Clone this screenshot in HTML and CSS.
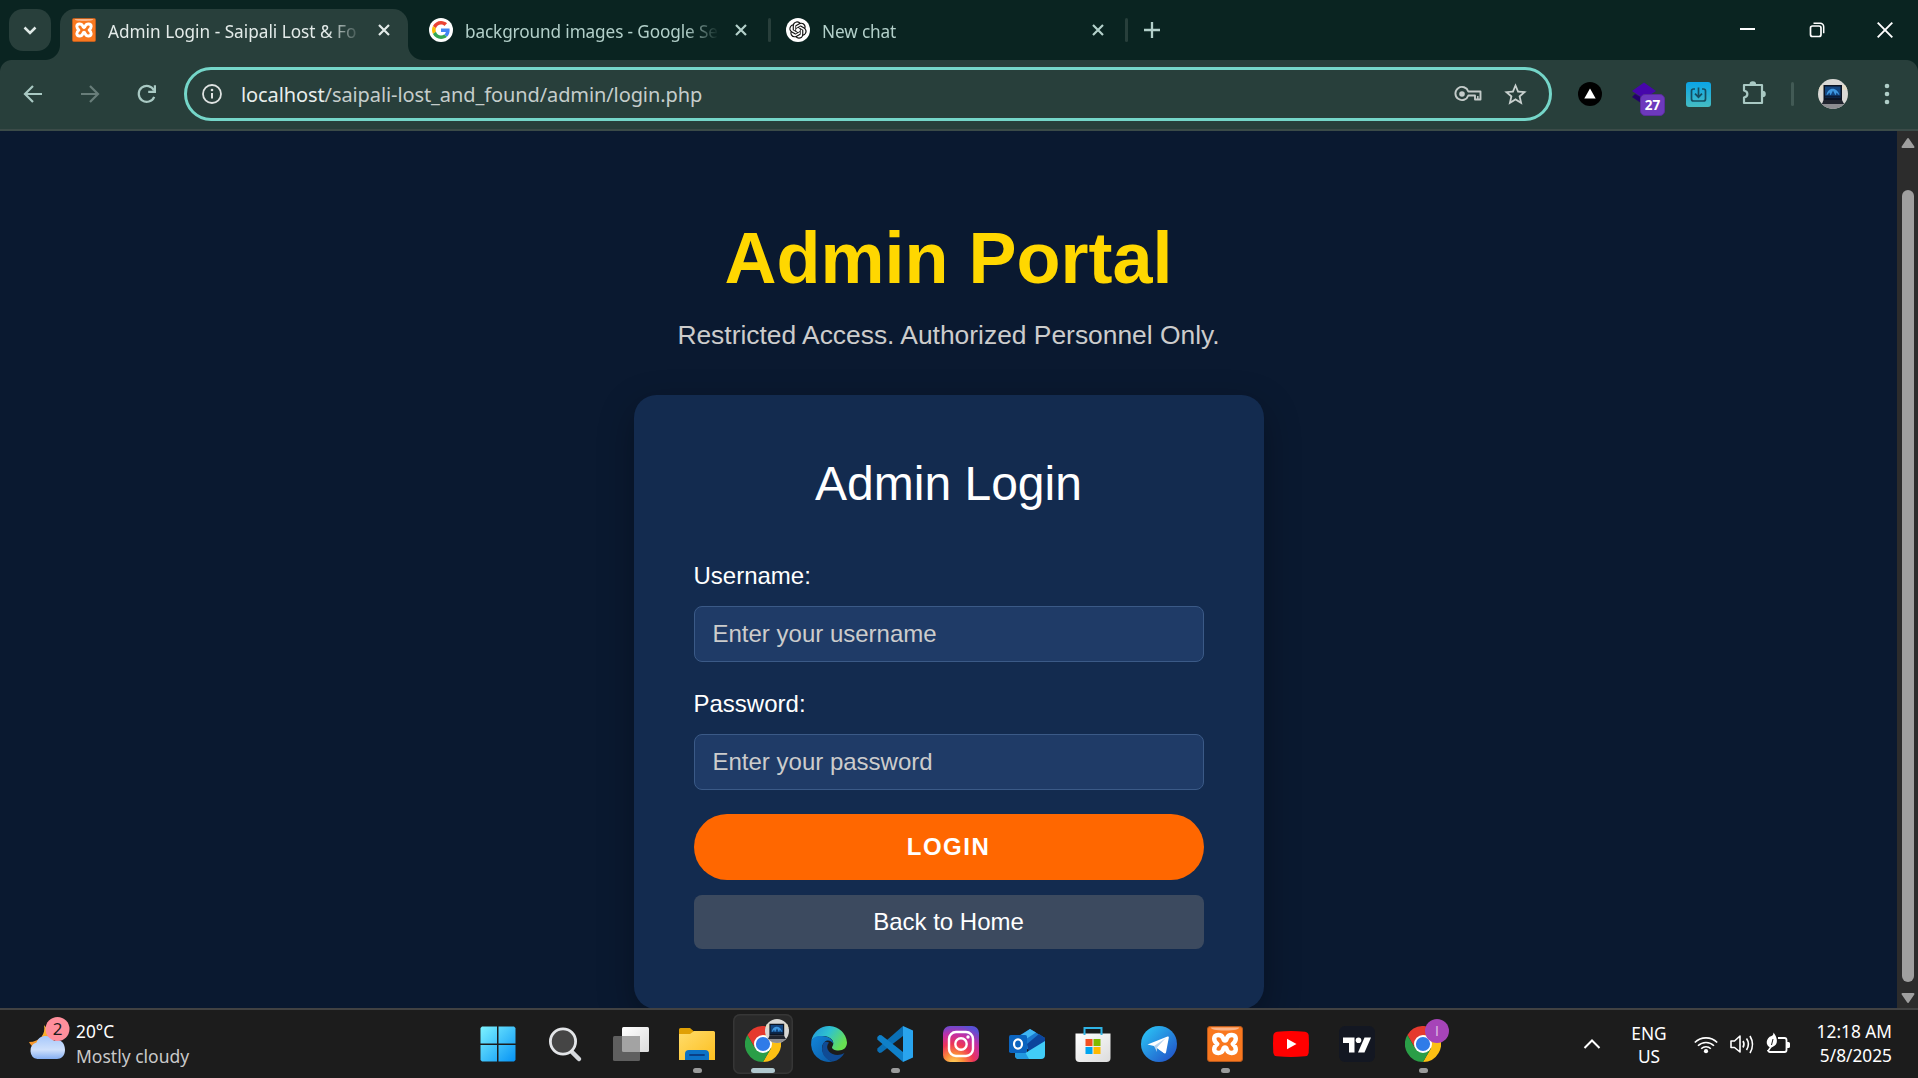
FILE: index.html
```html
<!DOCTYPE html>
<html lang="en">
<head>
<meta charset="utf-8">
<title>Admin Login - Saipali Lost &amp; Found</title>
<link rel="stylesheet" href="styles.css">
</head>
<body>
<svg class="defs" width="0" height="0" aria-hidden="true">
  <defs>
    <linearGradient id="gWin" x1="0" y1="0" x2="1" y2="1"><stop offset="0" stop-color="#7df3ff"/><stop offset="1" stop-color="#0693f5"/></linearGradient>
    <linearGradient id="gFolder" x1="0" y1="0" x2="1" y2="1"><stop offset="0" stop-color="#ffdc6b"/><stop offset="1" stop-color="#fdbf1f"/></linearGradient>
    <linearGradient id="gEdgeTop" x1="0" y1="0" x2="1" y2=".5"><stop offset="0" stop-color="#2090dd"/><stop offset=".5" stop-color="#2fc2cf"/><stop offset="1" stop-color="#67e052"/></linearGradient>
    <linearGradient id="gEdgeLow" x1="0" y1="0" x2="1" y2="1"><stop offset="0" stop-color="#1186da"/><stop offset="1" stop-color="#0c59a4"/></linearGradient>
    <radialGradient id="gInsta" cx=".3" cy="1.05" r="1.1"><stop offset="0" stop-color="#ffd85c"/><stop offset=".25" stop-color="#fb8d3a"/><stop offset=".5" stop-color="#ee3557"/><stop offset=".75" stop-color="#c32fa6"/><stop offset="1" stop-color="#5a50d5"/></radialGradient>
    <linearGradient id="gTele" x1="0" y1="0" x2="1" y2="1"><stop offset="0" stop-color="#2bcdf9"/><stop offset="1" stop-color="#2149c4"/></linearGradient>
    <linearGradient id="gCloud" x1="0" y1="0" x2="0" y2="1"><stop offset="0" stop-color="#a6c8fb"/><stop offset=".6" stop-color="#cfe0fb"/><stop offset="1" stop-color="#84aef2"/></linearGradient>
    <linearGradient id="gMoon" x1="0" y1="0" x2="0" y2="1"><stop offset="0" stop-color="#ffc32e"/><stop offset="1" stop-color="#f2882b"/></linearGradient>
    <linearGradient id="gExt" x1="0" y1="0" x2="0" y2="1"><stop offset="0" stop-color="#0aa4e6"/><stop offset="1" stop-color="#45bcc2"/></linearGradient>
    <linearGradient id="gSheet" x1="0" y1="0" x2="1" y2="1"><stop offset="0" stop-color="#fff"/><stop offset="1" stop-color="#dcdcdc"/></linearGradient>
    <symbol id="xampp" viewBox="0 0 36 36">
      <rect x=".5" y=".5" width="35" height="35" rx="2.5" fill="#f9781f" stroke="#b9591c"/>
      <path d="M4 1.500h28c0 2-4 3-14 3s-14-1-14-3z" fill="#fbb58a"/>
      <path d="M18 14.500c-1 0-1.500-.5-2-2.500C14.500 8 7.500 8 7.200 12.500c0 3 1.700 4.300 3.100 5.500-1.400 1.200-3.100 2.500-3.100 5.500.3 4.500 7.300 4.500 8.800.500.5-2 1-2.500 2-2.500s1.500.5 2 2.500c1.500 4 8.500 4 8.800-.5 0-3-1.700-4.300-3.100-5.500 1.400-1.200 3.100-2.500 3.100-5.500C28.500 8 21.500 8 20 12c-.5 2-1 2.500-2 2.500z" fill="none" stroke="#fff" stroke-width="4.400" stroke-linejoin="round"/>
    </symbol>
    <symbol id="chrome" viewBox="0 0 36 36">
      <path d="M18 9h15.600A18 18 0 0 1 18 36l7.800-13.500z" fill="#fcc013"/>
      <path d="M2.400 9A18 18 0 0 1 33.600 9H18l-7.800 13.500z" fill="#e5392e"/>
      <path d="M2.400 9A18 18 0 0 0 18 36l7.800-13.500H10.200z" fill="#2a9e47"/>
      <circle cx="18" cy="18" r="9" fill="#fff"/><circle cx="18" cy="18" r="7.100" fill="#2f7be8"/>
    </symbol>
    <symbol id="laptop" viewBox="0 0 30 30">
      <clipPath id="cLap"><circle cx="15" cy="15" r="15"/></clipPath>
      <g clip-path="url(#cLap)">
        <rect width="30" height="30" fill="#d9d8d5"/><rect y="6" width="30" height="5" fill="#e3dcc8"/><rect y="24" width="30" height="6" fill="#8d8d91"/>
        <path d="M5.500 6h18.500v15h-18.500z" fill="#0b1424"/><path d="M7 7.500h15.500v11H7z" fill="#124580"/><path d="M8.500 16.500c1-9 11-9 13 0l-3-3-1 3-2.500-5-2.500 5-1-3z" fill="#3d97e0"/><path d="M7 16.500h15.500v2H7z" fill="#0a1c38"/>
        <path d="M5.500 21h18.500l2 4h-22z" fill="#20242e"/>
      </g>
    </symbol>
    <symbol id="close" viewBox="0 0 12 12"><path d="M1 1l10 10M11 1 1 11" stroke="currentColor" stroke-width="2.200" fill="none"/></symbol>
  </defs>
</svg>

<div class="screen">
  <header class="tabstrip">
    <button class="tab-search"><svg width="14" height="9" viewBox="0 0 14 9"><path d="M1.500 1.500 7 7l5.500-5.500" fill="none" stroke="#dfe9e6" stroke-width="2.500"/></svg></button>
    <div class="tab tab-active">
      <svg class="favicon" width="24" height="24"><use href="#xampp"/></svg>
      <span class="tab-title title-admin">Admin Login - Saipali Lost &amp; Fo</span>
      <svg class="tab-close" width="12" height="12"><use href="#close"/></svg>
    </div>
    <div class="tab tab-google">
      <svg class="favicon" width="24" height="24" viewBox="0 0 24 24"><circle cx="12" cy="12" r="12" fill="#fff"/>
        <g transform="translate(3 3) scale(.375)"><path fill="#EA4335" d="M24 9.500c3.540 0 6.710 1.220 9.210 3.600l6.850-6.850C35.900 2.380 30.470 0 24 0 14.620 0 6.510 5.380 2.560 13.220l7.980 6.190C12.430 13.720 17.740 9.500 24 9.500z"/><path fill="#4285F4" d="M46.980 24.550c0-1.570-.15-3.090-.38-4.550H24v9.020h12.940c-.58 2.960-2.260 5.480-4.780 7.180l7.730 6c4.510-4.180 7.090-10.360 7.090-17.650z"/><path fill="#FBBC05" d="M10.530 28.590c-.48-1.450-.76-2.990-.76-4.590s.27-3.140.76-4.590l-7.980-6.190C.92 16.460 0 20.120 0 24c0 3.880.92 7.540 2.560 10.780l7.970-6.190z"/><path fill="#34A853" d="M24 48c6.480 0 11.930-2.130 15.890-5.810l-7.730-6c-2.150 1.450-4.920 2.300-8.160 2.300-6.260 0-11.570-4.220-13.470-9.910l-7.980 6.190C6.510 42.620 14.620 48 24 48z"/></g></svg>
      <span class="tab-title title-google">background images - Google Se</span>
      <svg class="tab-close" width="12" height="12"><use href="#close"/></svg>
    </div>
    <div class="tab-divider"></div>
    <div class="tab tab-chat">
      <svg class="favicon" width="24" height="24" viewBox="0 0 24 24"><circle cx="12" cy="12" r="12" fill="#fff"/>
        <g transform="translate(3.300 3.300) scale(.725)"><path fill="#111" d="M22.2819 9.8211a5.9847 5.9847 0 0 0-.5157-4.9108 6.0462 6.0462 0 0 0-6.5098-2.9A6.0651 6.0651 0 0 0 4.9807 4.1818a5.9847 5.9847 0 0 0-3.9977 2.9 6.0462 6.0462 0 0 0 .7427 7.0966 5.98 5.98 0 0 0 .511 4.9107 6.051 6.051 0 0 0 6.5146 2.9001A5.9847 5.9847 0 0 0 13.2599 24a6.0557 6.0557 0 0 0 5.7718-4.2058 5.9894 5.9894 0 0 0 3.9977-2.9001 6.0557 6.0557 0 0 0-.7475-7.0729zm-9.022 12.6081a4.4755 4.4755 0 0 1-2.8764-1.0408l.1419-.0804 4.7783-2.7582a.7948.7948 0 0 0 .3927-.6813v-6.7369l2.02 1.1686a.071.071 0 0 1 .038.052v5.5826a4.504 4.504 0 0 1-4.4945 4.4944zm-9.6607-4.1254a4.4708 4.4708 0 0 1-.5346-3.0137l.142.0852 4.783 2.7582a.7712.7712 0 0 0 .7806 0l5.8428-3.3685v2.3324a.0804.0804 0 0 1-.0332.0615L9.74 19.9502a4.4992 4.4992 0 0 1-6.1408-1.6464zM2.3408 7.8956a4.485 4.485 0 0 1 2.3655-1.9728V11.6a.7664.7664 0 0 0 .3879.6765l5.8144 3.3543-2.0201 1.1685a.0757.0757 0 0 1-.071 0l-4.8303-2.7865A4.504 4.504 0 0 1 2.3408 7.872zm16.5963 3.8558L13.1038 8.364 15.1192 7.2a.0757.0757 0 0 1 .071 0l4.8303 2.7913a4.4944 4.4944 0 0 1-.6765 8.1042v-5.6772a.79.79 0 0 0-.407-.667zm2.0107-3.0231l-.142-.0852-4.7735-2.7818a.7759.7759 0 0 0-.7854 0L9.409 9.2297V6.8974a.0662.0662 0 0 1 .0284-.0615l4.8303-2.7866a4.4992 4.4992 0 0 1 6.6802 4.66zM8.3065 12.863l-2.02-1.1638a.0804.0804 0 0 1-.038-.0567V6.0742a4.4992 4.4992 0 0 1 7.3757-3.4537l-.142.0805L8.704 5.459a.7948.7948 0 0 0-.3927.6813zm1.0976-2.3654l2.602-1.4998 2.6069 1.4998v2.9994l-2.5974 1.4997-2.6067-1.4997Z"/></g></svg>
      <span class="tab-title title-chat">New chat</span>
      <svg class="tab-close" width="12" height="12"><use href="#close"/></svg>
    </div>
    <div class="tab-divider"></div>
    <button class="new-tab"><svg width="16" height="16" viewBox="0 0 16 16"><path d="M8 0v16M0 8h16" stroke="#b3d0ca" stroke-width="2.300"/></svg></button>
    <div class="window-controls">
      <span class="win-btn"><svg width="15" height="15" viewBox="0 0 15 15"><path d="M0 7h15" stroke="#fff" stroke-width="2"/></svg></span>
      <span class="win-btn"><svg width="16" height="16" viewBox="0 0 16 16"><rect x="1.500" y="4" width="10.500" height="10.500" rx="2" fill="none" stroke="#fff" stroke-width="1.700"/><path d="M4.500 1.300h6.700a3.500 3.500 0 0 1 3.500 3.500v6.500" fill="none" stroke="#fff" stroke-width="1.500"/></svg></span>
      <span class="win-btn"><svg width="16" height="16" viewBox="0 0 16 16"><path d="M.7.7l14.600 14.600M15.300.7.7 15.300" stroke="#fff" stroke-width="1.900"/></svg></span>
    </div>
  </header>

  <div class="toolbar">
    <span class="nav-btn"><svg width="20" height="20" viewBox="0 0 20 20"><path d="M19 10H2.500M10 2l-8 8 8 8" fill="none" stroke="#a9c9c3" stroke-width="2.200"/></svg></span>
    <span class="nav-btn"><svg width="20" height="20" viewBox="0 0 20 20"><path d="M1 10h16.500M10 2l8 8-8 8" fill="none" stroke="#687d79" stroke-width="2.200"/></svg></span>
    <span class="nav-btn"><svg width="20" height="20" viewBox="0 0 20 20"><path d="M17.200 12.800A8 8 0 1 1 17 6.500" fill="none" stroke="#a9c9c3" stroke-width="2.200"/><path d="M17.900 1.200v6.700h-6.700" fill="none" stroke="#a9c9c3" stroke-width="2.200"/></svg></span>
    <div class="omnibox">
      <svg class="site-info" width="20" height="20" viewBox="0 0 20 20"><circle cx="10" cy="10" r="9" fill="none" stroke="#dfe3e2" stroke-width="1.800"/><path d="M10 9v5.500" stroke="#dfe3e2" stroke-width="2"/><circle cx="10" cy="6" r="1.300" fill="#dfe3e2"/></svg>
      <span class="url"><span class="url-host">localhost</span>/saipali-lost_and_found/admin/login.php</span>
      <svg class="key" width="28" height="16" viewBox="0 0 28 16"><path d="M14.300 5.500h12.200v8h-5.500v-4h-6.700A6.600 6.600 0 1 1 14.300 5.500z" fill="none" stroke="#c3cbc9" stroke-width="1.900" stroke-linejoin="round"/><path d="M23.800 10v3" stroke="#c3cbc9" stroke-width="1.500"/><circle cx="8" cy="8" r="2.800" fill="#c3cbc9"/></svg>
      <svg class="star" width="27" height="27" viewBox="0 0 24 24"><path fill="#c8d0ce" d="M22 9.240l-7.190-.62L12 2 9.190 8.630 2 9.240l5.460 4.730L5.820 21 12 17.270 18.180 21l-1.630-7.030L22 9.240zM12 15.400l-3.760 2.270 1-4.280-3.320-2.880 4.380-.38L12 6.100l1.710 4.040 4.380.38-3.320 2.880 1 4.280L12 15.400z"/></svg>
    </div>
    <div class="extensions">
      <span class="ext"><svg width="24" height="24" viewBox="0 0 24 24"><circle cx="12" cy="12" r="12"/><path d="M12 6.500 17.700 16.500H6.300z" fill="#fff"/></svg></span>
      <span class="ext ext-count"><svg width="24" height="24" viewBox="0 0 24 24"><path d="M0 15l3-3 9 5 9-5 3 3-12 8z" fill="#24006b"/><path d="M12 .5 24 9 12 17 0 9z" fill="#4706ab"/></svg><span class="count-badge">27</span></span>
      <span class="ext"><svg width="25" height="25" viewBox="0 0 25 25"><rect width="25" height="25" rx="3" fill="url(#gExt)"/><path d="M9 7H7.500a2 2 0 0 0-2 2v8a2 2 0 0 0 2 2h10a2 2 0 0 0 2-2V9a2 2 0 0 0-2-2H16" fill="none" stroke="#154d60" stroke-width="1.700"/><path d="M12.500 5.500V15M9 11.700l3.500 3.500 3.500-3.500" fill="none" stroke="#154d60" stroke-width="1.700"/></svg></span>
      <span class="ext"><svg class="puzzle" width="26" height="26" viewBox="0 0 26 26"><path d="M3 5h18v18H3v-5.500c4.500-1 4.500-6 0-7z" fill="none" stroke="#a9c9c3" stroke-width="2.200" stroke-linejoin="round"/><path d="M8.500 4.500a3.300 3.300 0 0 1 6.600 0zM21.500 10.700a3.300 3.300 0 0 1 0 6.600z" fill="#a9c9c3"/></svg></span>
    </div>
    <div class="toolbar-divider"></div>
    <span class="ext"><svg width="30" height="30"><use href="#laptop"/></svg></span>
    <span class="ext"><svg width="6" height="22" viewBox="0 0 6 22"><g fill="#b0cec8"><circle cx="3" cy="3" r="2.300"/><circle cx="3" cy="11" r="2.300"/><circle cx="3" cy="19" r="2.300"/></g></svg></span>
  </div>

  <div class="viewport">
    <main class="page">
      <h1 class="page-title">Admin Portal</h1>
      <p class="page-subtitle">Restricted Access. Authorized Personnel Only.</p>
      <form class="login-card">
        <h2 class="card-title">Admin Login</h2>
        <label class="field-label" for="username">Username:</label>
        <input class="field-input" id="username" type="text" placeholder="Enter your username">
        <label class="field-label" for="password">Password:</label>
        <input class="field-input" id="password" type="password" placeholder="Enter your password">
        <button class="btn-login" type="button">LOGIN</button>
        <a class="btn-home">Back to Home</a>
      </form>
    </main>
    <div class="scrollbar">
      <svg width="14" height="12" viewBox="0 0 14 12"><path d="M7 2 12.500 10h-11z" fill="#9f9f9f" stroke="#9f9f9f" stroke-width="2" stroke-linejoin="round"/></svg>
      <div class="scroll-thumb"></div>
      <svg width="14" height="12" viewBox="0 0 14 12"><path d="M7 10 12.500 2h-11z" fill="#9f9f9f" stroke="#9f9f9f" stroke-width="2" stroke-linejoin="round"/></svg>
    </div>
  </div>

  <footer class="taskbar">
    <div class="weather">
      <svg class="weather-icon" width="42" height="46" viewBox="0 0 42 46">
        <path d="M15 8c2 9-4 17-15 17 3 6 10 9 16 7l14-14C25 16 18 13 15 8z" fill="url(#gMoon)"/>
        <path d="M8.500 42a8.500 8.500 0 0 1-1-16.500C10 17 22 17 25 24c6-3 11 2 11 9 0 6-4 9-8 9z" fill="url(#gCloud)"/>
        <circle cx="28.500" cy="12" r="12" fill="#ff8f9c"/>
        <text x="28.500" y="17.500" class="weather-count">2</text>
      </svg>
      <div class="weather-text"><span class="temp">20°C</span><span class="condition">Mostly cloudy</span></div>
    </div>
    <nav class="apps">
      <span class="app app-start"><svg width="36" height="36" viewBox="0 0 36 36"><path d="M2 .5h15v17H.5V2zM18.500.5H34L35.500 2v15.500h-17zM.5 19H17v16.500H2L.5 34zM18.500 19h17v15L34 35.500H18.500z" fill="url(#gWin)"/></svg></span>
      <span class="app"><svg width="36" height="36" viewBox="0 0 36 36"><path d="M25 26l7 7" stroke="#d5d8dc" stroke-width="4.500" stroke-linecap="round"/><circle cx="16" cy="15.500" r="12.600" fill="#454545" stroke="#e3e5e8" stroke-width="2.800"/></svg></span>
      <span class="app"><svg width="36" height="36" viewBox="0 0 36 36"><rect x="9" y="1" width="27" height="25" rx="1.500" fill="url(#gSheet)"/><rect x="0" y="10" width="27" height="25" rx="1.500" fill="#5f5f5f"/><path d="M9 10h18v16H10.500A1.500 1.500 0 0 1 9 24.500z" fill="#a3a3a3"/></svg></span>
      <span class="app"><svg width="36" height="36" viewBox="0 0 36 36"><path d="M0 3.500A1.500 1.500 0 0 1 1.500 2h9.500l4 3.500h19.500V12H0z" fill="#e0a005"/><path d="M0 8h11l4-3h19.500A1.500 1.500 0 0 1 36 6.500V34H0z" fill="url(#gFolder)"/><path d="M6 34v-6a4 4 0 0 1 4-4h16a4 4 0 0 1 4 4v6z" fill="#0c72c6"/><path d="M11 29h14" stroke="#0a3f86" stroke-width="1.800" stroke-linecap="round"/></svg><i class="dot"></i></span>
      <span class="app app-active"><svg width="36" height="36"><use href="#chrome"/></svg><svg class="profile-badge" width="24" height="24"><use href="#laptop"/></svg><i class="dot dot-wide"></i></span>
      <span class="app"><svg width="36" height="36" viewBox="0 0 36 36">
        <path d="M.3 15A18 18 0 0 1 36 16.500c0 5-3.500 8-8.500 8-4 0-6.500-1.500-6.500-3 0-1 1.500-2 1.300-4.500C22 13 18 10.500 13 10 7 9.500 2 12 .3 15z" fill="url(#gEdgeTop)"/>
        <path d="M.3 15C2 10.500 7 9.500 11 10c7 .3 11.500 4 11.300 8-1.500-3.500-6-4.500-8.800-2-6 6 0 17 8.500 19.500A18 18 0 0 1 .3 15z" fill="url(#gEdgeLow)"/>
        <path d="M12.500 17C8.500 25 13 34 22 35.500c5-1 9-4 11.500-8.500-5 3-12 2.500-15.500-1.500-2.500-3-2.500-6 0-9-2-1-4.500-1-5.500.5z" fill="#104b94"/></svg></span>
      <span class="app"><svg width="36" height="36" viewBox="0 0 36 36"><path d="M26 0v10L4.500 26.500 2.500 27 .3 25v-2.500z" fill="#0a6fb5"/><path d="M26 36V26L4.500 9.300 2.500 9 .3 11v2.500z" fill="#0f80c9"/><path d="M26 0l10 4.500v27L26 36z" fill="#29a4ee"/></svg><i class="dot"></i></span>
      <span class="app"><svg width="36" height="36" viewBox="0 0 36 36"><rect width="36" height="36" rx="7" fill="url(#gInsta)"/><g fill="none" stroke="#fff" stroke-width="2.400"><rect x="6" y="6" width="24" height="24" rx="7"/><circle cx="18" cy="18" r="5.700"/></g><circle cx="25" cy="11" r="1.700" fill="#fff"/></svg></span>
      <span class="app"><svg width="36" height="36" viewBox="0 0 36 36"><path d="M6 12 21 3l15 9v3L6 29z" fill="#1a78cf"/><path d="M12 9 21 3l6 3.500L14 15z" fill="#3fb5f2"/><path d="M18 18 30 8l6 4v5L20 27z" fill="#0c459c"/><path d="M6 20l12 6 18-11v14a4 4 0 0 1-4 4H10a4 4 0 0 1-4-4z" fill="#41cdf8"/><path d="M6 18l10 8 4 7H10a4 4 0 0 1-4-4z" fill="#229ae0"/><rect y="9" width="18" height="18" rx="1.800" fill="#0b64bf"/><ellipse cx="9" cy="18" rx="4" ry="4.700" fill="none" stroke="#fff" stroke-width="2.200"/></svg></span>
      <span class="app"><svg width="36" height="36" viewBox="0 0 36 36"><path d="M.5 7.500h35V32a4 4 0 0 1-4 4h-27a4 4 0 0 1-4-4z" fill="url(#gSheet)"/><path d="M9.500 9V2h17v7" fill="none" stroke="#2fb4e6" stroke-width="2"/><path d="M10.500 13h7v7h-7z" fill="#f25022"/><path d="M18.500 13h7v7h-7z" fill="#7fba00"/><path d="M10.500 21h7v7h-7z" fill="#00a4ef"/><path d="M18.500 21h7v7h-7z" fill="#ffb900"/></svg></span>
      <span class="app"><svg width="36" height="36" viewBox="0 0 36 36"><circle cx="18" cy="18" r="18" fill="url(#gTele)"/><path d="M6.500 18.500 26.500 10.500c1-.4 1.500.2 1.300 1.300L25 26.500c-.3 1.200-1 1.200-1.800.7L13 20z" fill="#fff"/><path d="M13 20 25 12 16 22v4z" fill="#b6d3ee"/><path d="M25 12 16 21.500l7 5.500z" fill="#fff"/></svg></span>
      <span class="app"><svg width="36" height="36"><use href="#xampp"/></svg><i class="dot"></i></span>
      <span class="app"><svg width="36" height="36" viewBox="0 0 36 36"><path d="M4 5.700Q18 4.300 32 5.700q3.300.4 3.700 3.800.6 8.500 0 17-.4 3.400-3.700 3.800-14 1.400-28 0Q.7 29.900.3 26.500q-.6-8.500 0-17Q.7 6.100 4 5.700z" fill="red"/><path d="M14 12.700 23.500 18 14 23.300z" fill="#fff"/></svg></span>
      <span class="app"><svg width="36" height="36" viewBox="0 0 36 36"><rect width="36" height="36" rx="6" fill="#131722"/><g fill="#fff"><path d="M4 11.500h11.500v15H10V17H4z"/><circle cx="19.500" cy="14.200" r="2.800"/><path d="M25.500 11.500H32l-6.500 15H19z"/></g></svg></span>
      <span class="app"><svg width="36" height="36"><use href="#chrome"/></svg><span class="profile-badge profile-letter">I</span><i class="dot"></i></span>
    </nav>
    <div class="tray">
      <svg class="chevron" width="18" height="12" viewBox="0 0 18 12"><path d="M1.500 10 9 2.500l7.500 7.500" fill="none" stroke="#fff" stroke-width="2"/></svg>
      <div class="lang"><span>ENG</span><span>US</span></div>
      <div class="status">
        <svg width="24" height="20" viewBox="0 0 24 20"><g fill="none" stroke="#fff" stroke-width="1.600"><path d="M.8 8.500a15.800 15.800 0 0 1 22.400 0"/><path d="M4 11.800a11.300 11.300 0 0 1 16 0"/><path d="M7.200 14.800a6.800 6.800 0 0 1 9.600 0"/></g><circle cx="12" cy="17.200" r="2.100" fill="#fff"/></svg>
        <svg width="24" height="20" viewBox="0 0 24 20"><g fill="none" stroke="#fff" stroke-width="1.600"><path d="M1 7v6.500h3.500L10 18V2L4.500 7z" stroke-linejoin="round"/><path d="M13 7q2 3 0 6.500M16.500 4.500q3.800 5.500 0 11.500M20 2q5 8.500 0 17"/></g></svg>
        <svg width="24" height="20" viewBox="0 0 24 20"><path d="M12 4h6.500a2 2 0 0 1 2 2v10a2 2 0 0 1-2 2H4a2 2 0 0 1-2-2" fill="none" stroke="#fff" stroke-width="1.800"/><path d="M21 8h1.500a1.500 1.500 0 0 1 1.500 1.500v3a1.500 1.500 0 0 1-1.500 1.500H21z" fill="#fff"/><path d="M7.500-1.500c4 5 5.500 12-1 14.500L5 13.500C-1.500 12 0 3.500 5.500 2 7 1.500 7.500 0 7.500-1.500z" fill="#fff"/><path d="M2 17l3.500-5" stroke="#fff" stroke-width="1.500"/><path d="M7 5 5.500 11" stroke="#1c1c1c" stroke-width="1"/></svg>
      </div>
      <div class="clock"><span>12:18 AM</span><span>5/8/2025</span></div>
    </div>
  </footer>
</div>
</body>
</html>
```
FILE: styles.css
```css
* { box-sizing: border-box; }

body {
  margin: 0;
  overflow: hidden;
  background: #0a1930;
  font-family: "Noto Sans", "Open Sans", sans-serif;
}

svg { display: block; flex: none; overflow: visible; }
.defs { position: absolute; }
button { border: 0; padding: 0; background: none; font: inherit; }

.screen {
  width: 1918px;
  height: 1078px;
  display: flex;
  flex-direction: column;
}

/* Tab strip */
.tabstrip {
  height: 60px;
  flex: none;
  display: flex;
  background: #0a2421;
  padding-left: 9px;
}
.tab-search {
  width: 42px;
  height: 42px;
  margin: 9px 9px 0 0;
  border-radius: 14px;
  background: #283f3b;
  display: flex;
  align-items: center;
  justify-content: center;
}
.tab {
  height: 51px;
  margin-top: 9px;
  padding-bottom: 9px;
  display: flex;
  align-items: center;
  color: #b3d0ca;
  font-size: 17.2px;
  letter-spacing: -0.12px;
}
.tab-active {
  position: relative;
  width: 348px;
  padding-left: 12px;
  border-radius: 15px 15px 0 0;
  background: #283f3b;
  color: #e3ebe9;
}
.tab-active::before,
.tab-active::after {
  content: "";
  position: absolute;
  bottom: 0;
  width: 15px;
  height: 15px;
}
.tab-active::before { left: -15px; background: radial-gradient(circle at 0 0, transparent 14.5px, #283f3b 15.5px); }
.tab-active::after { right: -15px; background: radial-gradient(circle at 100% 0, transparent 14.5px, #283f3b 15.5px); }
.tab-google { width: 360px; padding-left: 21px; }
.tab-chat { width: 354px; padding-left: 15px; }
.tab-title {
  width: 252px;
  margin: 3px 18px 0 12px;
  white-space: nowrap;
  -webkit-mask-image: linear-gradient(90deg, #000 220px, transparent 254px);
  mask-image: linear-gradient(90deg, #000 220px, transparent 254px);
}
.title-admin { letter-spacing: 0; }
.tab-divider {
  width: 3px;
  height: 24px;
  margin-top: 18px;
  border-radius: 2px;
  background: #283f3b;
}
.new-tab { margin: 0 0 0 16px; height: 60px; }
.window-controls { display: flex; margin-left: auto; height: 59px; }
.win-btn {
  width: 69px;
  display: flex;
  align-items: center;
  justify-content: center;
}
.win-btn:last-child { width: 67px; }

/* Toolbar */
.toolbar {
  height: 71px;
  flex: none;
  display: flex;
  align-items: center;
  padding: 0 4px 1px 4px;
  border-bottom: 2px solid #3b4b48;
  background:
    radial-gradient(circle at 12px 12px, #283f3b 11.5px, #0a2421 12.5px) 0 0 / 12px 12px no-repeat,
    radial-gradient(circle at 0 12px, #283f3b 11.5px, #0a2421 12.5px) 100% 0 / 12px 12px no-repeat,
    #283f3b;
}
.nav-btn { width: 57px; display: flex; justify-content: center; }
.omnibox {
  width: 1368px;
  height: 54px;
  margin: 0 11px 0 9px;
  padding: 0 20px 0 16px;
  border: 3px solid #75d6c9;
  border-radius: 27px;
  display: flex;
  align-items: center;
}
.site-info { margin-left: -1px; }
.url { flex: 1; margin: 1px 0 0 19px; font-size: 20px; letter-spacing: -0.1px; white-space: nowrap; color: #c5cdcb; }
.url-host { color: #e8eeec; }
.star { margin-left: 20px; }
.extensions { display: flex; }
.ext { position: relative; width: 54px; display: flex; justify-content: center; align-items: center; }
.puzzle { margin: -3px 0 0 3px; }
.count-badge {
  position: absolute;
  left: 23px;
  top: 12px;
  width: 25px;
  height: 22px;
  border-radius: 5px;
  border: 1px solid #5a2d9c;
  background: #6d39bd;
  color: #fff;
  font-size: 13.5px;
  font-weight: 700;
  line-height: 21px;
  text-align: center;
}
.toolbar-divider { width: 3px; height: 24px; margin: 0 12px 0 12px; border-radius: 2px; background: #425a55; }

/* Page content */
.viewport { height: 877px; flex: none; display: flex; overflow: hidden; }
.page {
  width: 1897px;
  padding-top: 84px;
  display: flex;
  flex-direction: column;
  align-items: center;
  background: #0a1930;
  font-family: "Liberation Sans", Arial, sans-serif;
  color: #fff;
}
.page-title { margin: 0; font-size: 72px; line-height: 86px; font-weight: 700; color: #ffd700; }
.page-subtitle { margin: 14px 0 40px; font-size: 26.4px; line-height: 40px; color: #ccc; }
.login-card {
  width: 630px;
  height: 614px;
  flex: none;
  padding: 60px;
  border-radius: 22.5px;
  background: #132b4f;
  box-shadow: 0 12px 36px rgba(0, 0, 0, .3);
  display: flex;
  flex-direction: column;
  font-size: 24px;
}
.card-title { margin: 0 0 45px; font-size: 48px; line-height: 58px; font-weight: 400; text-align: center; }
.field-label { line-height: 36px; margin-bottom: 12px; }
.field-input {
  height: 56px;
  flex: none;
  padding: 0 18px;
  border: 1px solid #3b5a87;
  border-radius: 8px;
  background: #1f3b67;
  color: #fff;
  font: 24px "Liberation Sans", Arial, sans-serif;
  margin-bottom: 24px;
}
.field-input::placeholder { color: #ccc; opacity: 1; }
.btn-login {
  height: 66px;
  flex: none;
  margin: 0 0 15px;
  border-radius: 33px;
  background: #ff6700;
  color: #fff;
  font: 700 24px "Liberation Sans", Arial, sans-serif;
  letter-spacing: 1.5px;
}
.btn-home {
  height: 54px;
  flex: none;
  border-radius: 8px;
  background: #3c4a5f;
  line-height: 54px;
  text-align: center;
}

.scrollbar {
  width: 21px;
  padding: 6px 0 4px;
  background: #2c2c2c;
  display: flex;
  flex-direction: column;
  align-items: center;
}
.scroll-thumb { width: 12px; height: 792px; margin: 41px 0 auto; border-radius: 6px; background: #9f9f9f; }

/* Taskbar */
.taskbar {
  height: 70px;
  flex: none;
  display: grid;
  grid-template-columns: 469px 1fr 358px;
  border-top: 2px solid #424242;
  background: #1c1c1c;
  color: #fff;
  font-size: 17.3px;
  line-height: 24px;
}
.weather { display: flex; padding: 7px 0 0 29px; }
.weather-icon { margin-right: -1px; }
.weather-count { font-size: 17px; fill: #1c1c1c; text-anchor: middle; }
.weather-text { display: flex; flex-direction: column; margin: 3px 0 0 6px; }
.condition { color: #c9c9c9; font-size: 17.5px; }
.apps { display: flex; }
.app {
  position: relative;
  width: 60px;
  height: 60px;
  margin: 4px 6px 0 0;
  border-radius: 7px;
  display: flex;
  align-items: center;
  justify-content: center;
}
.app-start { padding-right: 3px; }
.app-active { background: #292929; box-shadow: inset 0 0 0 1.5px #363636; }
.dot {
  position: absolute;
  left: 25.5px;
  bottom: 1px;
  width: 9px;
  height: 5px;
  border-radius: 2.5px;
  background: #9b9b9b;
}
.dot-wide { left: 18px; width: 24px; background: #b1c8cf; }
.profile-badge { position: absolute; left: 32px; top: 5px; }
.profile-letter {
  width: 24px;
  height: 24px;
  border-radius: 12px;
  background: #a644b8;
  color: #dcb8e2;
  font: 14px/24px "Liberation Sans", Arial, sans-serif;
  text-align: center;
}
.tray { display: flex; align-items: center; padding-right: 26px; }
.chevron { margin: 0 0 0 23px; }
.lang { width: 60px; margin: 2px 0 0 18px; text-align: center; display: flex; flex-direction: column; line-height: 23px; }
.status { display: flex; gap: 12px; margin: 0 auto 0 15px; }
.clock { text-align: right; display: flex; flex-direction: column; margin-top: -1px; }
```
